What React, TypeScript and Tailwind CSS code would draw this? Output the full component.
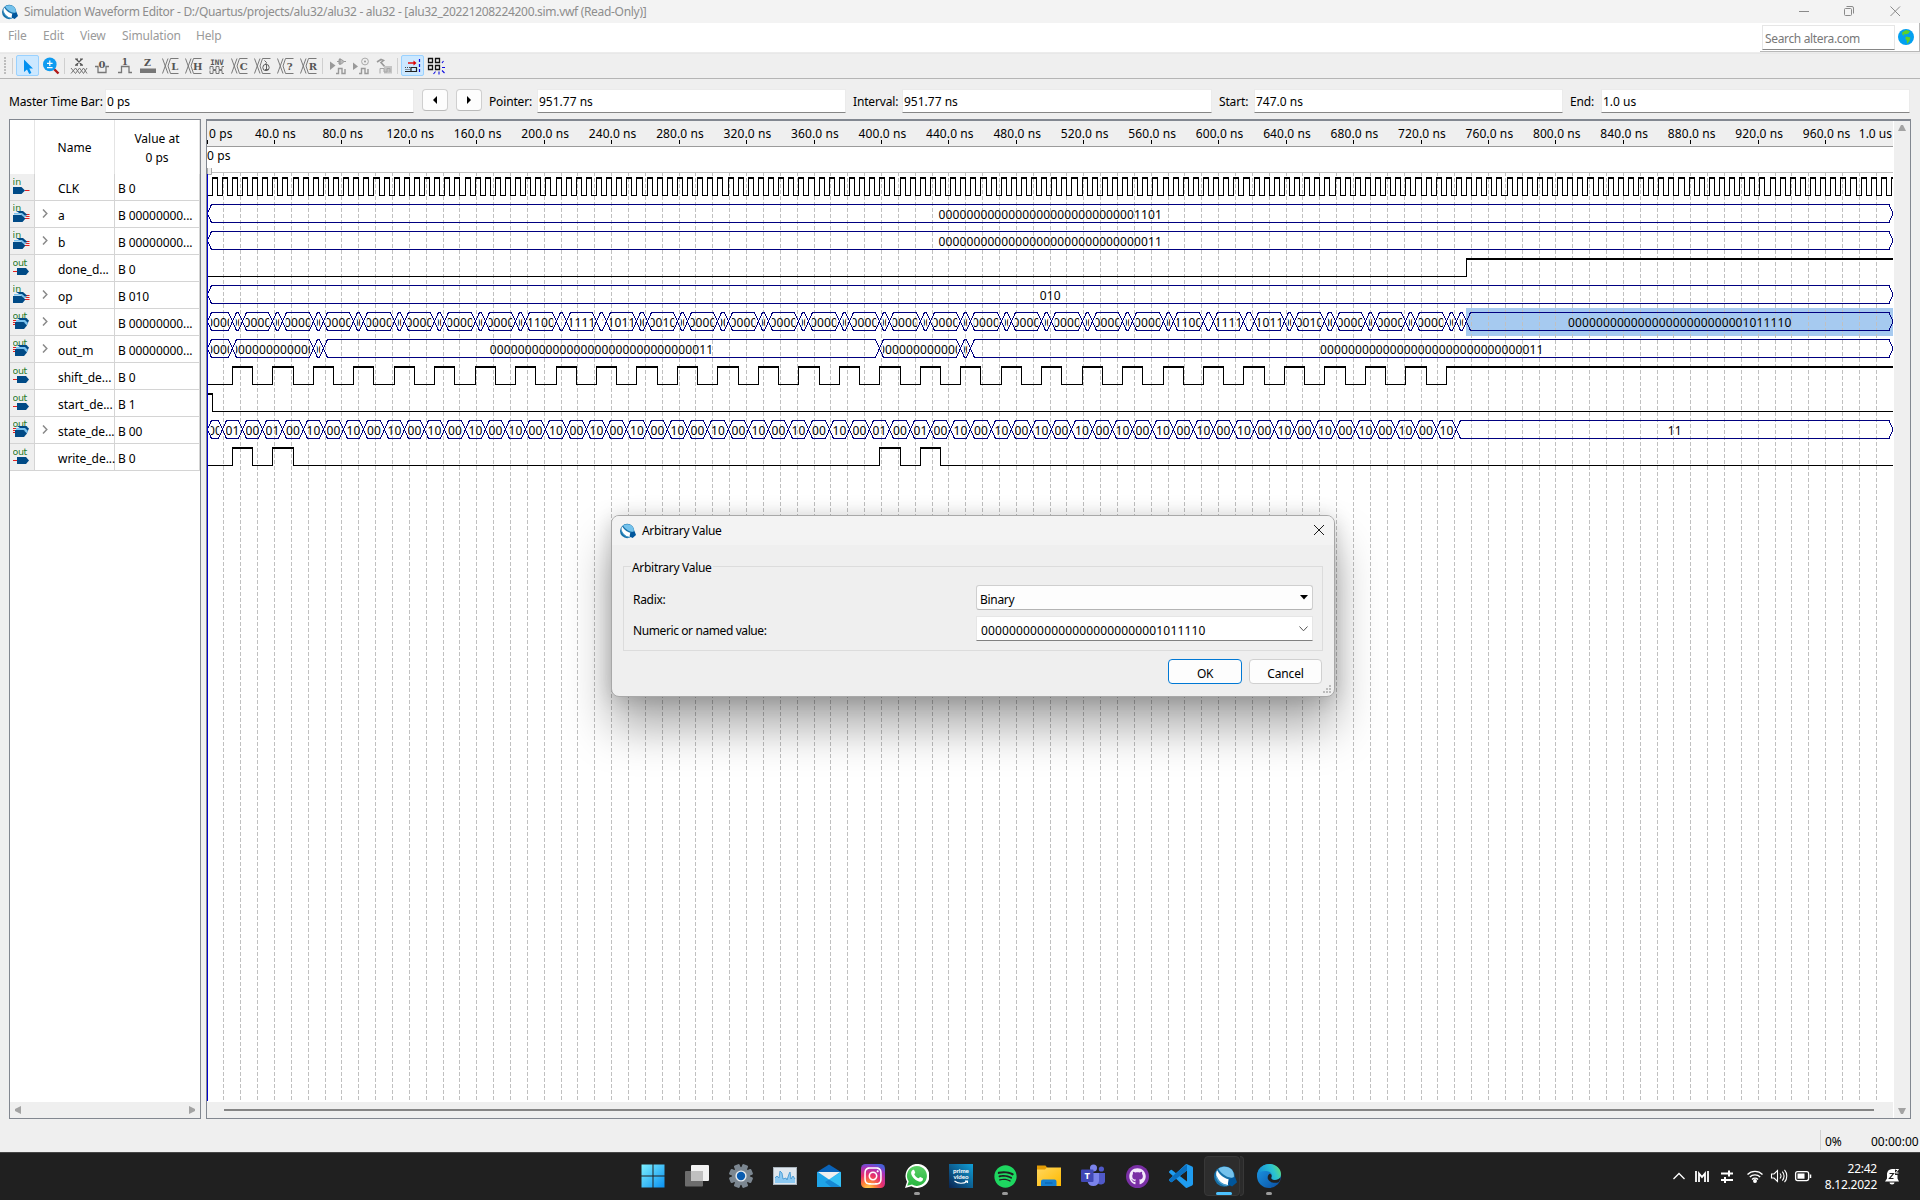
import React from "react";
import { FaSpotify, FaGithub, FaInstagram } from "react-icons/fa";

const px = (t: number) => 207.03 + t * 1.6861;
const snap = (t: number) => Math.floor(px(t)) + 0.5;
const NAVY = "#000080";
const Z4 = "0000";
const Z12 = "000000000000";

type Seg = [number, number, string];

function outSegments(): Seg[] {
  const labels: Record<number, string> = { 7: "1100", 8: "1111", 9: "1011", 10: "0010", 23: "1100", 24: "1111", 25: "1011", 26: "0010" };
  const list: Seg[] = [[0, 15, Z4]];
  for (let k = 0; k < 30; k++) {
    const base = 15 + 24 * k;
    const ones = k % 16 === 8 || k % 16 === 9;
    list.push([base, base + 6, ones ? "11" : "00"]);
    list.push([base + 6, k === 29 ? 735 : base + 24, labels[k] ?? Z4]);
  }
  list.push([735, 741, "00"], [741, 747, "00"], [747, 1000, "0".repeat(25) + "1011110"]);
  return list;
}

function stateSegments(): Seg[] {
  const list: Seg[] = [[0, 9, "00"]];
  for (let k = 1; k <= 61; k++) {
    const s = 9 + 12 * (k - 1);
    const one = [1, 3, 33, 35].includes(k);
    list.push([s, s + 12, k % 2 === 0 ? "00" : one ? "01" : "10"]);
  }
  list.push([741, 1000, "11"]);
  return list;
}

const shiftLevels: [number, number][] = [];
for (let k = 0; k < 30; k++) shiftLevels.push([15 + 24 * k, 27 + 24 * k]);
shiftLevels.push([735, 1001]);
const clkLevels: [number, number][] = [];
for (let k = 0; k < 167; k++) clkLevels.push([3 + 6 * k, 6 + 6 * k]);

function BitWave({ row, highs }: { row: number; highs: [number, number][] }) {
  const y = 177 + 27 * row;
  const lo = y + 18.5;
  let d = `M207 ${lo}`;
  let top = "";
  highs.forEach(([a, b]) => {
    const xa = a === 0 ? 207 : snap(a);
    const xb = b >= 1000 ? 1893 : snap(b);
    d += `H${xa}V${y + 1}M${xb} ${y + 1}V${lo}`;
    top += `M${xa - 0.5} ${y + 1}H${xb + 0.5}`;
  });
  if (!highs.length || highs[highs.length - 1][1] < 1000) d += "H1893";
  return (
    <g fill="none" stroke="#000" shapeRendering="crispEdges">
      <path d={d} />
      <path d={top} strokeWidth={2} />
    </g>
  );
}

function BusWave({ row, segs }: { row: number; segs: Seg[] }) {
  const t = 177 + 27 * row + 0.5;
  const b = t + 18;
  const m = t + 9;
  return (
    <g>
      {segs.map(([s, e, label], i) => {
        const x0 = s === 0 ? 207.5 : snap(s);
        const x1 = e === 1000 ? 1893 : snap(e);
        const id = `c${row}_${i}`;
        return (
          <g key={i}>
            <path
              d={`M${x0} ${m}L${x0 + 4} ${t}H${x1 - 4}L${x1} ${m}L${x1 - 4} ${b}H${x0 + 4}Z`}
              fill="none"
              stroke={NAVY}
              shapeRendering="crispEdges"
            />
            <clipPath id={id}>
              <rect x={x0 + 3.3} y={t} width={Math.max(x1 - x0 - 6.6, 1)} height={18} />
            </clipPath>
            <text x={(x0 + x1) / 2} y={t + 14.5} clipPath={`url(#${id})`} textAnchor="middle" letterSpacing="0.12">
              {label}
            </text>
          </g>
        );
      })}
    </g>
  );
}

function WaveCanvas() {
  const grid: number[] = [];
  for (let t = 10; t < 1000; t += 10) grid.push(t);
  const ticks: number[] = [];
  for (let t = 40; t < 1000; t += 40) ticks.push(t);
  return (
    <svg width={1686} height={981} viewBox="207 121 1686 981" className="block bg-white" fontSize={12} fontFamily="'Noto Sans', sans-serif">
      <rect x={207} y={121} width={1686} height={25} fill="#efefef" />
      <path d="M207 146.5H1893" stroke="#9b9b9b" />
      <path d="M212 172.5H1893" stroke="#c0c0c0" />
      <path d="M207.5 168V174.5H211.5V168" fill="#f0f0f0" stroke="#a9a9a9" />
      <g stroke="#000" shapeRendering="crispEdges">
        <path d="M207.5 140V144" />
        {ticks.map((t) => (
          <path key={t} d={`M${snap(t)} 140V144`} />
        ))}
      </g>
      <text x={209} y={138} letterSpacing="0.1">0 ps</text>
      {ticks.map((t) => (
        <text key={t} x={px(t) + 0.9} y={138} textAnchor="middle" letterSpacing="0.1">{`${t}.0 ns`}</text>
      ))}
      <text x={1892} y={138} textAnchor="end">1.0 us</text>
      <text x={207} y={160} letterSpacing="0.1">0 ps</text>

      <rect x={1466} y={308} width={427} height={28} fill="#a6caf0" />
      <g stroke="#c0c0c0" strokeDasharray="4 2" shapeRendering="crispEdges">
        {grid.map((t) => (
          <path key={t} d={`M${snap(t)} 172V1101`} />
        ))}
      </g>
      <BitWave row={0} highs={clkLevels} />
      <BusWave row={1} segs={[[0, 1000, "0".repeat(28) + "1101"]]} />
      <BusWave row={2} segs={[[0, 1000, "0".repeat(30) + "11"]]} />
      <BitWave row={3} highs={[[747, 1001]]} />
      <BusWave row={4} segs={[[0, 1000, "010"]]} />
      <BusWave row={5} segs={outSegments()} />
      <BusWave
        row={6}
        segs={[[0, 15, Z4], [15, 63, Z12], [63, 69, "00"], [69, 399, "0".repeat(30) + "11"], [399, 447, Z12], [447, 453, "00"], [453, 1000, "0".repeat(30) + "11"]]}
      />
      <BitWave row={7} highs={shiftLevels} />
      <BitWave row={8} highs={[[0, 3]]} />
      <BusWave row={9} segs={stateSegments()} />
      <BitWave row={10} highs={[[15, 27], [39, 51], [399, 411], [423, 435]]} />
      <path d="M207.5 174V1101" stroke="#0000d0" shapeRendering="crispEdges" />
    </svg>
  );
}

function QuartusLogo({ size }: { size: number }) {
  return (
    <svg width={size} height={size} viewBox="0 0 16 16">
      <circle cx="7.2" cy="8" r="7.2" fill="#1670a8" />
      <path d="M3 2.6C6.5 0.4 11 1 13 4.2C14 6 14 7.8 13.6 9C9.5 9 5.5 6.8 3 2.6Z" fill="#74c2ec" />
      <path d="M2.2 3.6C4.4 7.4 7.6 9.6 11.6 10.2L9.6 14C6.4 13.8 3.4 11.6 2 8.6C1.3 6.8 1.3 5 2.2 3.6Z" fill="#fff" />
      <path d="M1.6 8.2C2.8 11.4 5.8 13.9 9 14.3" stroke="#4a9fd0" strokeWidth="1" fill="none" />
      <path d="M10.2 9.8L14.6 8.2L16 12L12.6 15L9.6 13.6Z" fill="#00569c" />
    </svg>
  );
}

/* ---------- toolbar ---------- */
function Ico({ children, on = false }: { children: React.ReactNode; on?: boolean }) {
  return (
    <div className={"flex h-[21px] w-[23px] shrink-0 items-center justify-center " + (on ? "rounded-[2px] border border-[#99d1ff] bg-[#cce8ff]" : "")}>
      <svg width="18" height="18" viewBox="0 0 18 18" className="shrink-0" fill="none" stroke="#606060" strokeWidth="1">
        {children}
      </svg>
    </div>
  );
}

const Sep = ({ cls }: { cls: string }) => <div className={"h-4 w-px shrink-0 bg-[#cfcfcf] " + cls} />;

const Glyph = ({ x, y, s, c = "#555", children }: { x: number; y: number; s: number; c?: string; children: string }) => (
  <text x={x} y={y} fontSize={s} fontWeight="bold" fontFamily="'DejaVu Serif', serif" textAnchor="middle" fill={c} stroke="none">
    {children}
  </text>
);

const XBus = ({ letter }: { letter: string }) => (
  <Ico>
    <path d="M0.5 1.5L6 16.5M6 1.5L0.5 16.5M8.5 1.5H16.5M8.5 16.5H16.5M8.5 1.5L6 9L8.5 16.5" stroke="#7a7a7a" />
    {letter ? (
      <Glyph x={12.8} y={12.8} s={10}>{letter}</Glyph>
    ) : (
      <g><circle cx="12" cy="10.5" r="3.2" /><path d="M10.5 3.5L12.5 5.5L11.5 7.5M12.5 8V12.5M11 12.5H14" /></g>
    )}
  </Ico>
);

function Toolbar() {
  return (
    <div className="flex h-[24px] items-center border-t border-[#e8e8e8] bg-[#efefef]">
      <div className="ml-1 flex h-[18px] w-[2px] flex-col justify-between">
        {[0, 1, 2, 3, 4, 5].map((i) => (
          <div key={i} className="h-[2px] w-[2px] bg-[#bdbdbd]" />
        ))}
      </div>
      <Sep cls="ml-1.5 mr-[3px]" />
      <Ico on>
        <path d="M5 2.5V15L8 12.4L10.2 17L12.4 16L10.3 11.6H14Z" fill="#0090f0" stroke="none" />
      </Ico>
      <Ico>
        <path d="M12 12L16.5 16.5" stroke="#b01818" strokeWidth="2.4" />
        <circle cx="7.8" cy="7.4" r="6.8" fill="#0f9bf0" stroke="none" />
        <path d="M5 6.3H10.6M7.8 3.5V9M5 10.7H10.6" stroke="#fff" strokeWidth="1.2" />
      </Ico>
      <Sep cls="ml-[2px] mr-[2px]" />
      <Ico>
        <path d="M6 2L12 8M12 2L6 8M5 2H8M10 2H13M5 8.2H8M10 8.2H13" stroke="#555" strokeWidth="1.2" />
        <path d="M1 11L5.5 16.5L9.5 11L13.5 16.5L17 11M1 16.5L5.5 11L9.5 16.5L13.5 11L17 16.5" stroke="#777" />
      </Ico>
      <Ico>
        <path d="M2 9.5H5V15.5H13V9.5H16" stroke="#777" strokeWidth="1.3" />
        <Glyph x={9} y={11} s={10}>0</Glyph>
      </Ico>
      <Ico>
        <path d="M2 15.5H5.5V9.5H13V15.5H16" stroke="#777" strokeWidth="1.3" />
        <Glyph x={9} y={8} s={9}>1</Glyph>
      </Ico>
      <Ico>
        <Glyph x={8.5} y={8.8} s={9.5}>Z</Glyph>
        <rect x="1" y="11.5" width="16" height="4.5" fill="#777" stroke="none" />
      </Ico>
      <XBus letter="L" />
      <XBus letter="H" />
      <Ico>
        <text x="9" y="8" fontSize="7.5" fontWeight="bold" fontFamily="'DejaVu Sans Mono', monospace" textAnchor="middle" fill="#555" stroke="none">INV</text>
        <path d="M2 12.5V9.5H5V12.5H8V9.5H11V12.5H14V9.5H16M2 13.5V16.5H5V13.5H8V16.5H11V13.5H14V16.5H16" stroke="#777" />
      </Ico>
      <XBus letter="C" />
      <XBus letter="" />
      <XBus letter="?" />
      <XBus letter="R" />
      <Sep cls="ml-[2px] mr-[3px]" />
      <Ico>
        <path d="M1 4.5V13L6.5 8.5Z" fill="#999" stroke="none" />
        <path d="M8 4.5H10M10 2.5H12.5L15 4.5L12.5 7H10ZM15 4.5H17M11 1V8" stroke="#999" fill="#bbb" />
        <path d="M7 16.5H9.5V11.5H13V16.5H16V12" stroke="#999" strokeWidth="1.4" />
      </Ico>
      <Ico>
        <path d="M1 5.5V13L6 9.5Z" fill="#999" stroke="none" />
        <circle cx="13" cy="4.5" r="3.4" stroke="#aaa" />
        <circle cx="13" cy="4.5" r="1" fill="#999" stroke="none" />
        <path d="M7 16.5H9.5V11.5H13V16.5H16V12" stroke="#999" strokeWidth="1.4" />
      </Ico>
      <Ico>
        <path d="M2 5L6 2.5L8.5 3.5L6 5.5L11 11" stroke="#999" strokeWidth="1.6" />
        <rect x="9" y="9" width="8" height="7.5" fill="#c4c4c4" stroke="none" />
        <path d="M5 16.5V11.5H9V15H12V11.5H15V15" stroke="#a6a6a6" />
      </Ico>
      <Sep cls="ml-[2px] mr-[3px]" />
      <Ico on>
        <path d="M4 6H10" stroke="#e00000" strokeWidth="1.4" />
        <path d="M9.5 3.5L12.5 6L9.5 8.5Z" fill="#e00000" stroke="none" />
        <path d="M7 10.5H12.5V14.5H7ZM1 14.5H7" stroke="#222" strokeWidth="1.2" />
        <path d="M1 10.5H7M1.5 12.5H7" stroke="#444" strokeDasharray="1 1" />
        <path d="M15.5 2V17" stroke="#1010e0" strokeWidth="1.2" strokeDasharray="3 2" />
      </Ico>
      <Ico>
        <path d="M1.5 1.5H5.5V5.5H1.5ZM8.5 1.5H12.5V5.5H8.5ZM1.5 8.5H5.5V12.5H1.5ZM8.5 8.5H12.5V12.5H8.5Z" stroke="#111" strokeWidth="1.3" />
        <path d="M16.5 4L15 6M15 10.5H18M15 13.5L17.5 16M12 14.5V17.5M8.5 14.5L6.5 17" stroke="#1010e0" strokeWidth="1.1" />
      </Ico>
    </div>
  );
}

/* ---------- time fields ---------- */
const Field = ({ cls, children }: { cls: string; children: string }) => (
  <div className={"flex h-[24px] shrink-0 items-center border border-b-[#868686] border-[#ebebeb] bg-white pl-[1px] pt-[2px] " + cls}>{children}</div>
);
const Label = ({ cls, children }: { cls: string; children: string }) => (
  <span className={"shrink-0 whitespace-nowrap pt-[5px] tracking-[-0.15px] " + cls}>{children}</span>
);
const StepBtn = ({ d, cls }: { d: string; cls: string }) => (
  <div className={"flex h-[22px] w-[26px] shrink-0 items-center justify-center rounded-[4px] border border-[#cfcfcf] border-b-[#bababa] bg-[#fdfdfd] " + cls}>
    <svg width="8" height="8" viewBox="0 0 8 8"><path d={d} fill="#000" /></svg>
  </div>
);

/* ---------- node list ---------- */
const Chev = () => (
  <svg width="6" height="9" viewBox="0 0 6 9" fill="none" stroke="#8a8a8a" strokeWidth="1.5"><path d="M1 0.5L4.8 4.5L1 8.5" /></svg>
);

function PortIcon({ kind }: { kind: string }) {
  const out = kind.startsWith("out");
  const bus = kind.endsWith("bus");
  return (
    <svg width="18" height="22" viewBox="0 0 18 22" className="ml-[3px] mt-[2px]">
      <text x="-0.5" y={bus ? "8.4" : "9.4"} fontSize="9.5" fill="#2a7a2a" fontFamily="'DejaVu Sans', sans-serif" letterSpacing={out ? "-0.4" : "0"}>
        {out ? "out" : "in"}
      </text>
      {!out && !bus && <g><path d="M12 14.5H16.5" stroke="#e02020" /><path d="M0 11H8.5L12 14.5L8.5 18H0Z" fill="#004a86" /></g>}
      {out && !bus && <g><path d="M0 14.5H5" stroke="#e02020" /><path d="M4 11H13L16 14.5L13 18H4Z" fill="#004a86" /></g>}
      {!out && bus && (
        <g>
          <path d="M11 11.5H16.5M12 13.5H16.5M12 15.5H16.5" stroke="#e02020" />
          <path d="M3 8H10L14.5 12L11 13Z" fill="#004a86" />
          <path d="M1 10H9L13.5 14H10L8.5 11.5H1Z" fill="#7cc4f0" />
          <path d="M0 12H8.5L12.5 15.5L9.5 19H0Z" fill="#004a86" />
        </g>
      )}
      {out && bus && (
        <g>
          <path d="M0 9.5H4M0 11.5H4M0 13.5H4" stroke="#e02020" />
          <path d="M4 7H13L16 9.5L14 14Z" fill="#004a86" />
          <path d="M3 9H12L15 12L13 15L11 11H3Z" fill="#7cc4f0" />
          <path d="M2 11H10.5L14 14.5L11 18H2Z" fill="#004a86" />
        </g>
      )}
    </svg>
  );
}

const nodes: [string, string, string][] = [
  ["in", "CLK", "B 0"],
  ["in-bus", "a", "B 00000000..."],
  ["in-bus", "b", "B 00000000..."],
  ["out", "done_d...", "B 0"],
  ["in-bus", "op", "B 010"],
  ["out-bus", "out", "B 00000000..."],
  ["out-bus", "out_m", "B 00000000..."],
  ["out", "shift_de...", "B 0"],
  ["out", "start_de...", "B 1"],
  ["out-bus", "state_de...", "B 00"],
  ["out", "write_de...", "B 0"],
];

function NodeList() {
  return (
    <div className="flex w-[192px] shrink-0 flex-col border border-[#828790] bg-white">
      <div className="flex h-[54px] shrink-0">
        <div className="w-[25px] border-r border-[#e4e4e4]" />
        <div className="flex w-[80px] items-center justify-center border-r border-[#e4e4e4] pt-[2px]">Name</div>
        <div className="flex w-[85px] flex-col items-center justify-center border-r border-[#e4e4e4] pt-[2px] leading-[19px]">
          <span>Value at</span>
          <span>0 ps</span>
        </div>
      </div>
      {nodes.map(([kind, name, value]) => (
        <div key={name} className="flex h-[27px] shrink-0">
          <div className="w-[25px] border-b border-r border-[#d4d4d4] bg-[#efefef]"><PortIcon kind={kind} /></div>
          <div className="flex w-[80px] items-center border-b border-r border-[#d4d4d4]">
            <div className="w-[23px] shrink-0 pb-[1px] pl-[7px]">{kind.endsWith("bus") && <Chev />}</div>
            <div className="shrink-0 whitespace-pre pt-[4px] tracking-[-0.05px]">{name}</div>
          </div>
          <div className="flex w-[85px] items-center whitespace-pre border-b border-r border-[#d4d4d4] pl-[3px] pt-[4px] tracking-[-0.08px]">{value}</div>
        </div>
      ))}
      <div className="mt-auto flex h-4 items-center justify-between bg-[#efefef] px-[5px]">
        <svg width="6" height="8" viewBox="0 0 6 8"><path d="M6 0V8L0 5V3Z" fill="#a3a3a3" /></svg>
        <svg width="6" height="8" viewBox="0 0 6 8"><path d="M0 0V8L6 5V3Z" fill="#a3a3a3" /></svg>
      </div>
    </div>
  );
}

/* ---------- dialog ---------- */
function Dialog() {
  return (
    <div className="absolute left-[611px] top-[515px] flex h-[182px] w-[724px] flex-col rounded-[8px] border border-[#a8a8a8] bg-[#efefef] tracking-[-0.3px] shadow-[0_30px_46px_rgba(0,0,0,0.34),0_2px_20px_rgba(0,0,0,0.18)]">
      <div className="flex h-[29px] shrink-0 items-center rounded-t-[7px] bg-[#f3f3f3] pl-[8px] pr-[9px]">
        <QuartusLogo size={16} />
        <span className="ml-[6px] flex-1 pt-[1px]">Arbitrary Value</span>
        <svg width="12" height="12" viewBox="0 0 12 12" stroke="#1a1a1a" fill="none" className="mb-px"><path d="M1 1L11 11M11 1L1 11" /></svg>
      </div>
      <fieldset className="relative mx-[11px] mt-[12px] h-[94px] shrink-0 border border-[#dcdcdc] pl-[9px] pr-[9px]">
        <legend className="ml-[-2px] h-[18px] px-[1px] pt-[2px] leading-[18px]">Arbitrary Value</legend>
        <div className="mt-[10px] flex h-[25px] items-center justify-between">
          <span className="pt-[5px]">Radix:</span>
          <div className="flex h-[25px] w-[337px] items-center justify-between rounded-[3px] border border-[#cfcfcf] border-b-[#b4b4b4] bg-[#fdfdfd] pl-[3px] pr-[4px]">
            <span className="pt-[5px]">Binary</span>
            <svg width="8" height="5" viewBox="0 0 8 5"><path d="M0 0H8L4 4.5Z" /></svg>
          </div>
        </div>
        <div className="mt-[6px] flex h-[25px] items-center justify-between">
          <span className="pt-[5px] tracking-[-0.4px]">Numeric or named value:</span>
          <div className="flex h-[25px] w-[337px] items-center justify-between border border-[#e6e6e6] border-b-[#808080] bg-white pl-[4px] pr-[4px]">
            <span className="pt-[5px] tracking-[0.15px]">{"0".repeat(25) + "1011110"}</span>
            <svg width="9" height="6" viewBox="0 0 9 6" fill="none" stroke="#555"><path d="M0.5 0.5L4.5 4.8L8.5 0.5" /></svg>
          </div>
        </div>
      </fieldset>
      <div className="mr-[12px] mt-[8px] flex justify-end gap-[7px]">
        <div className="flex h-[25px] w-[74px] items-center justify-center rounded-[4px] border border-[#0078d4] bg-[#fdfdfd] pt-[4px]">OK</div>
        <div className="flex h-[25px] w-[73px] items-center justify-center rounded-[4px] border border-[#d0d0d0] bg-[#fdfdfd] pt-[4px] tracking-[-0.15px]">Cancel</div>
      </div>
      <svg width="9" height="9" viewBox="0 0 9 9" className="absolute bottom-[2px] right-[2px]" fill="#bcbcbc">
        <path d="M6 0H8V2H6ZM3 3H5V5H3ZM6 3H8V5H6ZM0 6H2V8H0ZM3 6H5V8H3ZM6 6H8V8H6Z" />
      </svg>
    </div>
  );
}

/* ---------- taskbar ---------- */
const App24 = ({ children }: { children: React.ReactNode }) => (
  <svg width="24" height="24" viewBox="0 0 24 24">{children}</svg>
);

function Slot({ children, dot = false, active = false }: { children: React.ReactNode; dot?: boolean; active?: boolean }) {
  return (
    <div className="relative flex h-[47px] w-[44px] items-center justify-center">
      {active && <div className="absolute left-[1px] top-[3px] h-[40px] w-[36px] rounded-[4px] border border-[#383838] bg-[#2d2d2d]" />}
      {active && <div className="absolute left-[37px] top-[3px] h-[40px] w-[4px] rounded-r-[4px] border border-l-0 border-[#383838] bg-[#2b2b2b]" />}
      <div className="relative pb-px">{children}</div>
      {dot && <div className="absolute bottom-[5px] left-[19px] h-[3px] w-[6px] rounded-full bg-[#9a9a9a]" />}
      {active && <div className="absolute bottom-[5px] left-[13px] h-[3px] w-[16px] rounded-full bg-[#4cc2ff]" />}
    </div>
  );
}

const gearTeeth = [0, 45, 90, 135, 180, 225, 270, 315];

function Taskbar() {
  return (
    <div className="flex h-[48px] shrink-0 border-t border-[#454545] bg-[#202020] pl-[631px]">
      <svg width="0" height="0" className="absolute">
        <defs>
          <linearGradient id="win" x1="0" y1="0" x2="1" y2="1"><stop offset="0" stopColor="#7df0ff" /><stop offset="1" stopColor="#0a90f0" /></linearGradient>
          <linearGradient id="fold" x1="0" y1="0" x2="1" y2="1"><stop offset="0" stopColor="#ffd75e" /><stop offset="1" stopColor="#ffb900" /></linearGradient>
          <linearGradient id="pv" x1="1" y1="0" x2="0" y2="1"><stop offset="0" stopColor="#10a0d8" /><stop offset="1" stopColor="#0a2350" /></linearGradient>
          <linearGradient id="edgeg" x1="0" y1="0.3" x2="1" y2="0"><stop offset="0" stopColor="#1590d8" /><stop offset="0.6" stopColor="#2cc4cf" /><stop offset="1" stopColor="#6fe05a" /></linearGradient>
          <linearGradient id="edgeb" x1="0" y1="0" x2="1" y2="1"><stop offset="0" stopColor="#1c9ce8" /><stop offset="1" stopColor="#0a4ca0" /></linearGradient>
          <radialGradient id="ig" cx="0.3" cy="1.05" r="1.1"><stop offset="0" stopColor="#ffdd55" /><stop offset="0.25" stopColor="#ff8a35" /><stop offset="0.55" stopColor="#e8306c" /><stop offset="0.85" stopColor="#a035c0" /><stop offset="1" stopColor="#4a5fd8" /></radialGradient>
          <linearGradient id="wa" x1="0" y1="0" x2="0" y2="1"><stop offset="0" stopColor="#5bd066" /><stop offset="1" stopColor="#28b640" /></linearGradient>
        </defs>
      </svg>
      <Slot><App24><path d="M0.5 0.5H11.5V11.5H0.5ZM12.5 0.5H23.5V11.5H12.5ZM0.5 12.5H11.5V23.5H0.5ZM12.5 12.5H23.5V23.5H12.5Z" fill="url(#win)" /></App24></Slot>
      <Slot><App24><rect x="6" y="1" width="18" height="16" rx="1" fill="#f2f2f2" /><rect x="0" y="7" width="18" height="15.5" rx="1" fill="#6d6d6d" /><rect x="6" y="7" width="12" height="10" fill="#c0c0c0" /></App24></Slot>
      <Slot>
        <App24>
          {gearTeeth.map((a) => (
            <rect key={a} x="9" y="0" width="6" height="6" rx="1.2" fill="#7c8791" transform={`rotate(${a + 22.5} 12 12)`} />
          ))}
          <circle cx="12" cy="12" r="9" fill="#7c8791" /><circle cx="12" cy="12" r="5.6" fill="#e8ecef" /><circle cx="12" cy="12" r="4.2" fill="#0a5cb0" />
        </App24>
      </Slot>
      <Slot><App24><rect x="0.5" y="3.5" width="23" height="17" fill="#dfe7ee" stroke="#a9b4bd" /><path d="M2 18V13L4 12L6 14L7 7L9 9L10 15L13 14L14 16L16 10L17 8L18 15L20 12L22 15V19H2Z" fill="#8cc9f2" /><path d="M2 14L4 12L6 14L7 7L9 9L10 15L13 14L14 16L16 10L17 8L18 15L20 12L22 15" fill="none" stroke="#3a93d0" strokeWidth="0.8" /></App24></Slot>
      <Slot><App24><path d="M0 8L12 0.5L24 8V12H0Z" fill="#0a63b8" /><path d="M0 8H24V23H0Z" fill="#1fa4e8" /><path d="M24 8V23L12 15.5Z" fill="#35c0f5" /><path d="M12 15.5L24 23H14L8 18Z" fill="#1688d4" /><path d="M1 8H23L12 15.5Z" fill="#f0f0f0" /></App24></Slot>
      <Slot>
        <div className="relative flex h-6 w-6 items-center justify-center">
          <div className="absolute inset-0"><App24><rect width="24" height="24" rx="4.5" fill="url(#ig)" /></App24></div>
          <FaInstagram size={20} color="#fff" className="relative" />
        </div>
      </Slot>
      <Slot dot><App24><path d="M0 24L2 17.8A12 12 0 1 1 6.4 22.3Z" fill="#fff" /><path d="M2.2 21.8L3.7 17.6A10 10 0 1 1 7 20.6Z" fill="url(#wa)" /><path d="M8 5.8C8.8 5.5 9.3 6 9.6 6.9L10.2 8.5C10.2 9.2 9.2 9.9 9.2 10.2C10 12 11.8 13.6 13.6 14.3C14.2 14.2 14.7 12.9 15.3 13L17.8 14.2C18.3 14.6 17.9 16.2 17.3 16.8C15.6 18.3 13 17.7 10.4 15.8C8 13.9 6.2 11.2 6.1 9C6.2 7.5 7.2 6.1 8 5.8Z" fill="#fff" /></App24></Slot>
      <Slot>
        <App24>
          <rect width="24" height="24" fill="url(#pv)" />
          <text x="12" y="9" fontSize="6.2" fontWeight="bold" fill="#fff" textAnchor="middle" fontFamily="Lato, sans-serif">prime</text>
          <text x="12" y="15" fontSize="6.2" fontWeight="bold" fill="#fff" textAnchor="middle" fontFamily="Lato, sans-serif">video</text>
          <path d="M5.5 17C9 20 14.5 20 18 17.5M16 17H18.5V19" fill="none" stroke="#fff" strokeWidth="1.1" />
        </App24>
      </Slot>
      <Slot dot><div className="flex h-6 w-6 items-center justify-center"><FaSpotify size={23} color="#1ed760" /></div></Slot>
      <Slot><App24><path d="M0 1.5H8.5L10.5 4V7H0Z" fill="#e39c05" /><path d="M0 5.5H8L10 3.5H24V22H0Z" fill="url(#fold)" /><path d="M4 22V17.5A2 2 0 0 1 6 15.5H17.5A2 2 0 0 1 19.5 17.5V22Z" fill="#1580d0" /><path d="M8 19H15.5" stroke="#0a5ca8" /></App24></Slot>
      <Slot>
        <App24>
          <circle cx="20.4" cy="5" r="2.6" fill="#5059c9" /><path d="M16 9H24V16A4 4 0 0 1 16 17Z" fill="#5059c9" />
          <circle cx="12.5" cy="4" r="3.5" fill="#7b83eb" /><path d="M6.5 9H18V17A5.8 5.8 0 0 1 6.5 17Z" fill="#7b83eb" />
          <rect x="0" y="5.5" width="12.5" height="12.5" rx="1" fill="#4048b5" />
          <text x="6.2" y="15.2" fontSize="9.5" fontWeight="bold" fill="#fff" textAnchor="middle" fontFamily="'Noto Sans', sans-serif">T</text>
        </App24>
      </Slot>
      <Slot><div className="flex h-[23px] w-[23px] items-center justify-center rounded-full bg-[#7a2fa5]"><FaGithub size={17} color="#f3e8fa" /></div></Slot>
      <Slot><App24><path fill="#1f9cf0" d="M23.15 2.587L18.21.21a1.494 1.494 0 0 0-1.705.29l-9.46 8.63-4.12-3.128a.999.999 0 0 0-1.276.057L.327 7.261A1 1 0 0 0 .326 8.74L3.899 12 .326 15.26a1 1 0 0 0 .001 1.479L1.65 17.94a.999.999 0 0 0 1.276.057l4.12-3.128 9.46 8.63a1.492 1.492 0 0 0 1.704.29l4.942-2.377A1.5 1.5 0 0 0 24 20.06V3.939a1.5 1.5 0 0 0-.85-1.352zm-5.146 14.861L10.826 12l7.178-5.448v10.896z" /><path d="M18 0.2L7 9.1L3.9 12L0.3 15.3V16.6L1.6 17.9H3L18 6.5Z" fill="#0a6fc0" /></App24></Slot>
      <Slot active><QuartusLogo size={23} /></Slot>
      <Slot dot>
        <App24>
          <circle cx="12" cy="12" r="12" fill="url(#edgeb)" />
          <path d="M0.2 10.5C1.5 3.5 7 0 12.5 0C19 0 24 4.8 24 10C24 14 21 16 18 16C15.5 16 13.8 15 14.5 13.8C16 11.5 14.5 8 10.5 7.2C6 6.4 1.5 8 0.2 10.5Z" fill="url(#edgeg)" />
          <path d="M14.2 13.5C13.8 15 15.5 16 18 16C20.2 16 22.3 15.2 23.4 13.6C23.6 15 22.6 17.2 21.6 18.2C17.5 19.8 12.5 18.5 10.8 14.8C10.4 12.5 11.2 10.6 12.6 9.8C14.8 10.4 15 12 14.2 13.5Z" fill="#202020" />
        </App24>
      </Slot>
      <div className="flex-1" />
      <svg width="140" height="47" viewBox="1672 1153 140 47" fill="none" stroke="#fff" strokeWidth="1.3">
        <path d="M1673.5 1179L1679 1173.5L1684.5 1179" />
        <path d="M1696 1171V1182M1708 1171V1182M1699 1182V1173.5L1702 1177L1705 1173.5V1182" strokeWidth="1.8" />
        <path d="M1721 1173.5H1733M1721 1180H1733" strokeWidth="1.8" /><path d="M1729 1170.5V1176.5M1725 1177V1183" strokeWidth="2" />
        <path d="M1747.5 1174.5A10.5 10.5 0 0 1 1762.5 1174.5M1749.8 1177A7.4 7.4 0 0 1 1760.2 1177M1752 1179.4A4.3 4.3 0 0 1 1758 1179.4" strokeWidth="1.4" />
        <circle cx="1755" cy="1181" r="1.3" fill="#fff" />
        <path d="M1771.5 1174H1774L1777.5 1170.5V1181.5L1774 1178H1771.5ZM1780 1173.5A4 4 0 0 1 1780 1178.5M1782.3 1171.5A6.6 6.6 0 0 1 1782.3 1180.5M1784.5 1169.8A9.5 9.5 0 0 1 1784.5 1182.2" strokeWidth="1.1" />
        <rect x="1795.6" y="1171.6" width="13" height="9" rx="2" /><rect x="1797.5" y="1173.5" width="7" height="5.2" fill="#fff" stroke="none" /><path d="M1810.5 1174.5V1178" strokeWidth="1.5" />
      </svg>
      <div className="flex w-[65px] flex-col items-end justify-center text-[12px] leading-[16px] text-white tracking-[-0.25px]">
        <span>22:42</span>
        <span>8.12.2022</span>
      </div>
      <svg width="43" height="47" viewBox="1877 1153 43 47" fill="#fff">
        <path d="M1885 1181.5L1887 1178.5V1173.5A5.5 5.5 0 0 1 1892 1169H1895V1175H1897.5V1178.5L1899 1181.5Z" />
        <path d="M1889.5 1182.5H1894.5A2.5 2 0 0 1 1889.5 1182.5Z" />
        <path d="M1889.5 1173.5H1893.5L1889.5 1178.5H1893.5" stroke="#202020" fill="none" strokeWidth="1.2" />
        <path d="M1895.5 1169.5H1898.5L1895.5 1173H1898.5" stroke="#fff" fill="none" />
      </svg>
    </div>
  );
}

export default function App() {
  return (
    <div className="relative flex h-[1200px] w-[1920px] flex-col overflow-hidden bg-[#efefef] font-['Noto_Sans',sans-serif] text-[12px] leading-[16px] text-black">
      <div className="flex h-[23px] shrink-0 items-center bg-[#f3f3f3] pl-[2px] text-[#8d8d8d]">
        <QuartusLogo size={16} />
        <span className="ml-[6px] whitespace-pre pt-px tracking-[-0.31px]">Simulation Waveform Editor - D:/Quartus/projects/alu32/alu32 - alu32 - [alu32_20221208224200.sim.vwf (Read-Only)]</span>
        <svg width="120" height="22" viewBox="1798 0 120 22" className="ml-auto mr-[2px]" fill="none" stroke="#8a8a8a">
          <path d="M1799 10.5H1809M1890.5 5.5L1900 15M1900 5.5L1890.5 15" />
          <rect x="1844.5" y="7.5" width="7" height="7" rx="1" />
          <path d="M1846.5 5.5H1852A1.5 1.5 0 0 1 1853.5 7V12.5" />
        </svg>
      </div>
      <div className="flex h-[30px] shrink-0 border-b border-[#ececec] bg-white text-[#9a9a9a]">
        <div className="flex h-[26px] items-center tracking-[-0.15px]">
          <span className="w-[35px] pl-[8px]">File</span>
          <span className="w-[37px] pl-[8px]">Edit</span>
          <span className="w-[42px] pl-[8px]">View</span>
          <span className="w-[74px] pl-[8px]">Simulation</span>
          <span className="pl-[8px]">Help</span>
        </div>
        <div className="ml-auto flex h-[29px] w-[160px] border-b border-r border-[#b8b8b8] pl-[2px] pt-[2px]">
          <div className="h-[25px] w-[133px] border border-b-[#868686] border-[#e6e6e6] pl-[2px] pt-[5px] tracking-[-0.35px] text-[#787878]">Search altera.com</div>
          <svg width="16" height="16" viewBox="0 0 16 16" className="ml-[3px] mt-[4px]">
            <circle cx="8" cy="8" r="8" fill="#03a0f0" />
            <path d="M4 3.5L8 1L12 2L10.5 4.5L7.5 5.5L5.5 4.8L6.5 7L4.5 6ZM8 7.5L12.5 8.5L11.5 12L9 15L8.8 11.5L7.2 9.5Z" fill="#5fd028" />
          </svg>
        </div>
      </div>
      <div className="shrink-0 border-b border-[#b5b5b5] pb-px"><Toolbar /></div>
      <div className="flex h-[40px] shrink-0 pl-[9px] pt-[10px]">
        <Label cls="w-[96px]">Master Time Bar:</Label>
        <Field cls="w-[309px]">0 ps</Field>
        <StepBtn cls="ml-[8px]" d="M6 0V8L2 4Z" />
        <StepBtn cls="ml-[8px]" d="M2 0V8L6 4Z" />
        <Label cls="ml-[7px] w-[48px]">Pointer:</Label>
        <Field cls="w-[309px]">951.77 ns</Field>
        <Label cls="ml-[7px] w-[49px]">Interval:</Label>
        <Field cls="w-[310px]">951.77 ns</Field>
        <Label cls="ml-[7px] w-[35px]">Start:</Label>
        <Field cls="w-[309px]">747.0 ns</Field>
        <Label cls="ml-[7px] w-[31px]">End:</Label>
        <Field cls="w-[309px]">1.0 us</Field>
      </div>
      <div className="flex h-[1000px] shrink-0 gap-[5px] pl-[9px]">
        <NodeList />
        <div className="flex w-[1705px] border border-t-2 border-[#828790]">
          <div className="flex w-[1686px] flex-col">
            <WaveCanvas />
            <div className="flex flex-1 items-center pl-[17px]"><div className="h-[2px] w-[1650px] bg-[#858585]" /></div>
          </div>
          <div className="flex w-[17px] flex-col items-center justify-between border-l border-white py-[4px]">
            <svg width="8" height="6" viewBox="0 0 8 6"><path d="M0 6H8L5 0H3Z" fill="#a3a3a3" /></svg>
            <svg width="8" height="6" viewBox="0 0 8 6"><path d="M0 0H8L5 6H3Z" fill="#a3a3a3" /></svg>
          </div>
        </div>
      </div>
      <div className="flex h-[33px] shrink-0 items-end justify-end pb-[2px]">
        <div className="h-5 w-px bg-[#d0d0d0]" />
        <span className="ml-[4px] w-[46px]">0%</span>
        <span className="w-[49px] whitespace-nowrap">00:00:00</span>
      </div>
      <Taskbar />
      <Dialog />
    </div>
  );
}
